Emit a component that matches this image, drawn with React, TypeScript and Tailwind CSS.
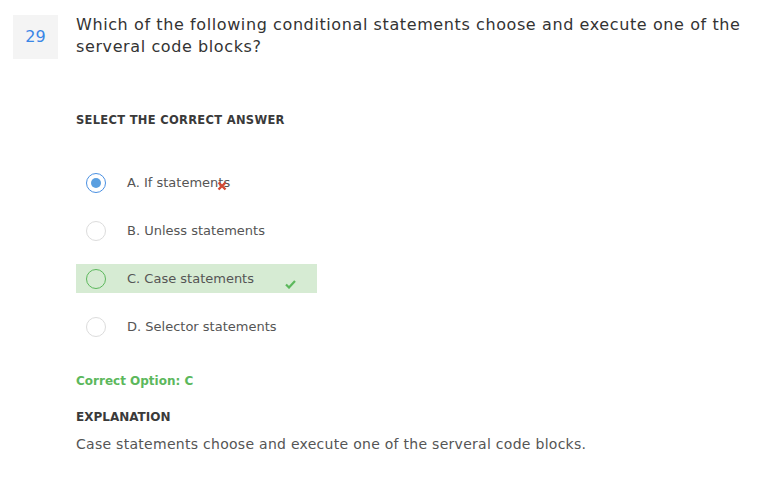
import React from "react";

type Option = {
  label: string;
  state: "selected-wrong" | "correct" | "none";
};

const options: Option[] = [
  { label: "A. If statements", state: "selected-wrong" },
  { label: "B. Unless statements", state: "none" },
  { label: "C. Case statements", state: "correct" },
  { label: "D. Selector statements", state: "none" },
];

function Radio({ state }: { state: Option["state"] }) {
  if (state === "selected-wrong") {
    return (
      <div className="w-5 h-5 rounded-full border-[1.5px] border-[#4a90e2] flex items-center justify-center shrink-0">
        <div className="w-[10px] h-[10px] rounded-full bg-[#5a9fe0]" />
      </div>
    );
  }
  if (state === "correct") {
    return <div className="w-5 h-5 rounded-full border-[1.5px] border-[#5cb85c] shrink-0" />;
  }
  return <div className="w-5 h-5 rounded-full border border-[#dcdcdc] bg-white shrink-0" />;
}

export default function App() {
  return (
    <div
      className="w-[759px] h-[479px] bg-white text-[#333] px-[13px] pt-[15px]"
      style={{ fontFamily: '"DejaVu Sans", "Liberation Sans", sans-serif' }}
    >
      {/* 题号 + 题目 */}
      <div className="flex gap-[18px]">
        <div className="w-[45px] h-[44px] bg-[#f4f4f4] flex items-center justify-center text-[#3a86e6] text-[16px] shrink-0">
          29
        </div>
        <p className="text-[16px] leading-[22px] -mt-[1px] tracking-[0.6px] text-[#333]">
          Which of the following conditional statements choose and execute one of the serveral code blocks?
        </p>
      </div>

      <div className="pl-[63px]">
        <h4 className="mt-[53px] text-[11.5px] leading-4 font-semibold tracking-[0.3px] text-[#3a3a3a]">
          SELECT THE CORRECT ANSWER
        </h4>

        {/* 选项列表 */}
        <div className="mt-[40px] flex flex-col gap-[19px]">
          {options.map((opt) => (
            <div
              key={opt.label}
              className={`relative w-[241px] h-[29px] flex items-center pl-[10px] gap-[21px] ${
                opt.state === "correct" ? "bg-[#d6ebd3]" : ""
              }`}
            >
              <Radio state={opt.state} />
              <span className="text-[13px] text-[#555]">{opt.label}</span>
              {opt.state === "selected-wrong" && (
                <svg
                  className="absolute left-[141px] top-[13px]"
                  width="10"
                  height="10"
                  viewBox="0 0 10 10"
                >
                  <path d="M1.5 1.5 L8.5 8.5 M8.5 1.5 L1.5 8.5" stroke="#d24a35" strokeWidth="2.4" />
                </svg>
              )}
              {opt.state === "correct" && (
                <svg
                  className="absolute left-[209px] top-[16px]"
                  width="11"
                  height="9"
                  viewBox="0 0 11 9"
                >
                  <path d="M1 4.5 L4 7.5 L10 1" stroke="#5cb85c" strokeWidth="2.2" fill="none" />
                </svg>
              )}
            </div>
          ))}
        </div>

        <div className="mt-[31px] text-[12px] font-semibold text-[#5cb85c]">Correct Option: C</div>

        <h4 className="mt-[18px] text-[12px] font-semibold text-[#3a3a3a]">EXPLANATION</h4>
        <p className="mt-[8px] text-[14px] tracking-[0.28px] text-[#555]">
          Case statements choose and execute one of the serveral code blocks.
        </p>
      </div>
    </div>
  );
}
